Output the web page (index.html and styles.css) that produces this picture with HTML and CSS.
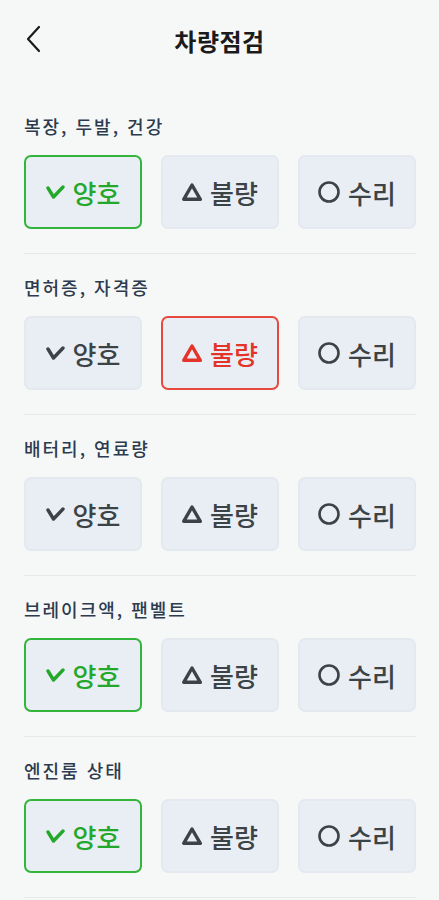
FILE: index.html
```html
<!DOCTYPE html>
<html lang="ko">

<head>
    <meta charset="UTF-8">
    <meta name="viewport" content="width=device-width, initial-scale=1.0">
    <title>차량점검</title>
    <link rel="stylesheet" href="styles.css">
</head>

<body>
    <header class="top-bar">
        <button class="back-button" aria-label="뒤로">
            <svg width="18" height="28" viewBox="0 0 18 28" fill="none">
                <path d="M15 2 L4 14 L15 26" stroke="#1b1b1b" stroke-width="2.2" stroke-linecap="round" stroke-linejoin="round" />
            </svg>
        </button>
        <h1>차량점검</h1>
    </header>

    <main class="check-list">
        <section class="check-item">
            <h2>복장, 두발, 건강</h2>
            <div class="options">
                <button class="option good selected">
                    <svg class="icon" width="19" height="14" viewBox="0 0 19 14"><path d="M2 3 L7.5 12 L17 2" /></svg>양호
                </button>
                <button class="option bad">
                    <svg class="icon" width="20" height="18" viewBox="0 0 20 18"><path d="M10 2 L18.3 16.3 L1.7 16.3 Z" /></svg>불량
                </button>
                <button class="option fix">
                    <svg class="icon thin" width="22" height="22" viewBox="0 0 22 22"><circle cx="11" cy="11" r="9.5" /></svg>수리
                </button>
            </div>
        </section>

        <section class="check-item">
            <h2>면허증, 자격증</h2>
            <div class="options">
                <button class="option good">
                    <svg class="icon" width="19" height="14" viewBox="0 0 19 14"><path d="M2 3 L7.5 12 L17 2" /></svg>양호
                </button>
                <button class="option bad selected">
                    <svg class="icon" width="20" height="18" viewBox="0 0 20 18"><path d="M10 2 L18.3 16.3 L1.7 16.3 Z" /></svg>불량
                </button>
                <button class="option fix">
                    <svg class="icon thin" width="22" height="22" viewBox="0 0 22 22"><circle cx="11" cy="11" r="9.5" /></svg>수리
                </button>
            </div>
        </section>

        <section class="check-item">
            <h2>배터리, 연료량</h2>
            <div class="options">
                <button class="option good">
                    <svg class="icon" width="19" height="14" viewBox="0 0 19 14"><path d="M2 3 L7.5 12 L17 2" /></svg>양호
                </button>
                <button class="option bad">
                    <svg class="icon" width="20" height="18" viewBox="0 0 20 18"><path d="M10 2 L18.3 16.3 L1.7 16.3 Z" /></svg>불량
                </button>
                <button class="option fix">
                    <svg class="icon thin" width="22" height="22" viewBox="0 0 22 22"><circle cx="11" cy="11" r="9.5" /></svg>수리
                </button>
            </div>
        </section>

        <section class="check-item">
            <h2>브레이크액, 팬벨트</h2>
            <div class="options">
                <button class="option good selected">
                    <svg class="icon" width="19" height="14" viewBox="0 0 19 14"><path d="M2 3 L7.5 12 L17 2" /></svg>양호
                </button>
                <button class="option bad">
                    <svg class="icon" width="20" height="18" viewBox="0 0 20 18"><path d="M10 2 L18.3 16.3 L1.7 16.3 Z" /></svg>불량
                </button>
                <button class="option fix">
                    <svg class="icon thin" width="22" height="22" viewBox="0 0 22 22"><circle cx="11" cy="11" r="9.5" /></svg>수리
                </button>
            </div>
        </section>

        <section class="check-item">
            <h2>엔진룸 상태</h2>
            <div class="options">
                <button class="option good selected">
                    <svg class="icon" width="19" height="14" viewBox="0 0 19 14"><path d="M2 3 L7.5 12 L17 2" /></svg>양호
                </button>
                <button class="option bad">
                    <svg class="icon" width="20" height="18" viewBox="0 0 20 18"><path d="M10 2 L18.3 16.3 L1.7 16.3 Z" /></svg>불량
                </button>
                <button class="option fix">
                    <svg class="icon thin" width="22" height="22" viewBox="0 0 22 22"><circle cx="11" cy="11" r="9.5" /></svg>수리
                </button>
            </div>
        </section>
    </main>
</body>

</html>
```

FILE: styles.css
```css
body {
    margin: 0;
    background: #f6f8f8;
    font-family: "Noto Sans CJK KR", "Noto Sans", sans-serif;
    color: #3b4347;
}

.top-bar {
    height: 80px;
    display: flex;
    align-items: center;
    justify-content: center;
    position: relative;
}

.top-bar h1 {
    margin: 0;
    font-size: 24px;
    letter-spacing: 0.5px;
    font-weight: 700;
    color: #1b1b1b;
}

.back-button {
    position: absolute;
    left: 24px;
    top: 25px;
    padding: 0;
    border: none;
    background: none;
    display: flex;
}

.check-list {
    padding: 13px 23px 0 24px;
}

.check-item {
    padding-top: 22px;
    padding-bottom: 24px;
    border-bottom: 1.5px solid #e4e8ea;
}

.check-item h2 {
    margin: 0 0 18px;
    font-size: 18px;
    line-height: 22px;
    letter-spacing: 2px;
    font-weight: 500;
    color: #2d3b4e;
}

.options {
    display: grid;
    grid-template-columns: repeat(3, 1fr);
    gap: 19px;
}

.option {
    height: 74px;
    border: 2px solid #e4e9ef;
    border-radius: 7px;
    background: #e9eef4;
    display: flex;
    align-items: center;
    justify-content: center;
    gap: 8px;
    font-family: inherit;
    font-size: 26px;
    font-weight: 500;
    color: #3b4347;
    padding: 0;
}

.option.good.selected {
    border-color: #33b43a;
    color: #24a82c;
}

.option.bad.selected {
    border-color: #e8493e;
    color: #e3342a;
}

/* Icons */
.icon {
    flex-shrink: 0;
    fill: none;
    stroke: currentColor;
    stroke-width: 3.4;
    stroke-linecap: round;
    stroke-linejoin: round;
}

.icon.thin {
    stroke-width: 2.6;
}
```
